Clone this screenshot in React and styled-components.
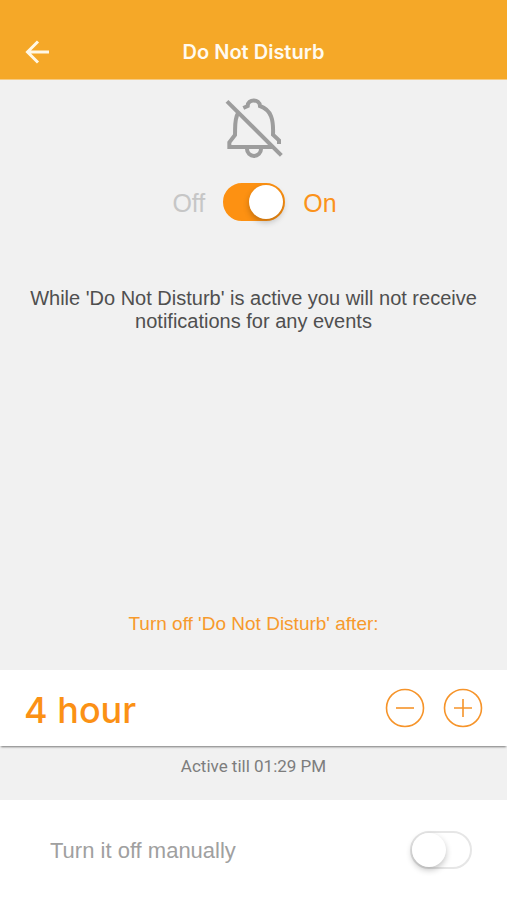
import React, { useState } from 'react';
import styled, { createGlobalStyle } from 'styled-components';

const GlobalStyle = createGlobalStyle`
  * { box-sizing: border-box; }
  body {
    margin: 0;
    background: #f1f1f1;
    font-family: "Liberation Sans", Arial, sans-serif;
  }
`;

const Screen = styled.div`
  min-height: 100vh;
  display: flex;
  flex-direction: column;
  background: #f1f1f1;
`;

const Header = styled.header`
  display: grid;
  grid-template-columns: 72px 1fr 72px;
  align-items: center;
  height: 80px;
  padding-top: 24px;
  background: #f5a828;
  border-bottom: 1px solid #f6cb83;
`;

const BackButton = styled.button`
  display: flex;
  align-items: center;
  height: 48px;
  padding: 0 0 0 24px;
  border: 0;
  background: none;
  color: #fff8e6;
  cursor: pointer;
`;

const Title = styled.h1`
  margin: 0;
  text-align: center;
  color: #fffaf0;
  font: 600 20px/24px Inter, sans-serif;
`;

const Main = styled.main`
  flex: 1;
  display: flex;
  flex-direction: column;
`;

const Status = styled.section`
  flex: 1;
  display: flex;
  flex-direction: column;
  align-items: center;
  padding: 17px 16px 32px;
`;

const ToggleLine = styled.div`
  display: flex;
  align-items: center;
  justify-content: center;
  gap: 18px;
  margin-top: 24px;
  padding-left: 2px;
`;

const StateLabel = styled.span`
  padding-top: 2px;
  font-size: 25px;
  line-height: 32px;
  color: ${(p) => (p.$active ? '#fb931b' : '#c6c6c6')};
`;

const Switch = styled.input`
  appearance: none;
  flex: none;
  display: flex;
  align-items: center;
  width: 62px;
  height: 38px;
  margin: 0;
  padding: 0;
  border: 2px solid #e6e6e6;
  border-radius: 19px;
  background: #fff;
  cursor: pointer;

  &::before {
    content: '';
    width: 34px;
    height: 34px;
    border-radius: 50%;
    background: #fff;
    box-shadow: 0 3px 6px rgba(0, 0, 0, 0.24);
  }

  &:checked {
    justify-content: flex-end;
    border-color: #fd9112;
    background: #fd9112;
  }
`;

const Description = styled.p`
  margin: 66px 0 0;
  text-align: center;
  color: #4f4f4f;
  font-size: 20px;
  line-height: 23px;
`;

const TimerCaption = styled.h2`
  margin: auto 0 0;
  color: #f79a2c;
  font-size: 19px;
  font-weight: 400;
  line-height: 28px;
`;

const TimerRow = styled.section`
  display: flex;
  align-items: center;
  justify-content: space-between;
  height: 76px;
  padding: 0 24px;
  background: #fff;
  box-shadow: 0 2px 2px -1px rgba(0, 0, 0, 0.5);
`;

const Duration = styled.output`
  padding-top: 3px;
  color: #fb9115;
  font: 500 36px/44px Inter, sans-serif;
`;

const Stepper = styled.div`
  display: flex;
  gap: 18px;
`;

const StepButton = styled.button`
  display: grid;
  place-items: center;
  width: 40px;
  height: 40px;
  padding: 0;
  border: 0;
  border-radius: 50%;
  background: none;
  color: #f6942a;
  cursor: pointer;
`;

const ActiveUntil = styled.p`
  margin: 0;
  height: 54px;
  text-align: center;
  color: #7d7d7d;
  font-family: Roboto, sans-serif;
  font-size: 17px;
  line-height: 40px;
`;

const ManualRow = styled.section`
  display: flex;
  align-items: center;
  justify-content: space-between;
  height: 100px;
  padding: 0 35px 0 50px;
  background: #fff;
`;

const ManualLabel = styled.label`
  padding-top: 2px;
  color: #a0a0a0;
  font-size: 22px;
  line-height: 28px;
`;

const BackIcon = () => (
  <svg width="26" height="26" viewBox="0 0 26 26" fill="none" stroke="currentColor" strokeWidth="3" aria-hidden="true">
    <path d="M25 13H3M14 2.5 3.5 13 14 23.5" />
  </svg>
);

const BellOffIcon = () => (
  <svg width="60" height="62" viewBox="42 36 180 186" fill="none" stroke="#9d9d9d" strokeWidth="12" aria-hidden="true">
    <path d="M51 49 214 211" />
    <path d="M85 83C73 101 76 122 75 150L58 172V186H190" />
    <path d="M100 69 113 63C113 41 149 41 150 63C184 75 191 104 189 149L207 166V177" />
    <path d="M111 192A21 21 0 0 0 153 192" />
  </svg>
);

const StepIcon = ({ plus }) => (
  <svg width="40" height="40" viewBox="0 0 40 40" fill="none" stroke="currentColor" strokeWidth="1.6" aria-hidden="true">
    <circle cx="20" cy="20" r="18.5" />
    <path d={plus ? 'M11 20H29M20 11V29' : 'M11 20H29'} />
  </svg>
);

export default function App() {
  const [enabled, setEnabled] = useState(true);
  const [manual, setManual] = useState(false);
  const [hours, setHours] = useState(4);

  return (
    <>
      <GlobalStyle />
      <Screen>
        <Header>
          <BackButton type="button" aria-label="Back"><BackIcon /></BackButton>
          <Title>Do Not Disturb</Title>
        </Header>
        <Main>
          <Status>
            <BellOffIcon />
            <ToggleLine>
              <StateLabel>Off</StateLabel>
              <Switch
                type="checkbox"
                role="switch"
                aria-label="Do Not Disturb"
                checked={enabled}
                onChange={(e) => setEnabled(e.target.checked)}
              />
              <StateLabel $active>On</StateLabel>
            </ToggleLine>
            <Description>
              While 'Do Not Disturb' is active you will not receive notifications for any events
            </Description>
            <TimerCaption>Turn off 'Do Not Disturb' after:</TimerCaption>
          </Status>
          <TimerRow>
            <Duration>{hours} hour</Duration>
            <Stepper>
              <StepButton type="button" aria-label="Decrease" onClick={() => setHours(Math.max(1, hours - 1))}>
                <StepIcon />
              </StepButton>
              <StepButton type="button" aria-label="Increase" onClick={() => setHours(hours + 1)}>
                <StepIcon plus />
              </StepButton>
            </Stepper>
          </TimerRow>
          <ActiveUntil>Active till 01:29 PM</ActiveUntil>
          <ManualRow>
            <ManualLabel htmlFor="manual">Turn it off manually</ManualLabel>
            <Switch
              id="manual"
              type="checkbox"
              role="switch"
              checked={manual}
              onChange={(e) => setManual(e.target.checked)}
            />
          </ManualRow>
        </Main>
      </Screen>
    </>
  );
}
